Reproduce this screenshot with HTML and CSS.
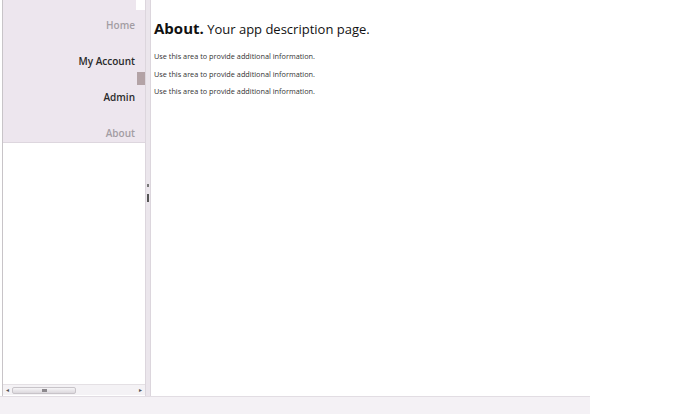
FILE: index.html
```html
<!DOCTYPE html>
<html>
<head>
<meta charset="utf-8">
<link rel="stylesheet" href="styles.css">
</head>
<body>
<div class="app">
  <div class="main">
    <div class="side">
      <div class="navbox">
        <ul class="nav">
          <li class="item dim">Home</li>
          <li class="item">My Account</li>
          <li class="item">Admin</li>
          <li class="item dim">About</li>
        </ul>
        <div class="vscroll">
          <div class="vcap"></div>
          <div class="vthumb"></div>
        </div>
      </div>
      <div class="sidefill"></div>
      <div class="hscroll">
        <span class="arrow">&#9666;</span>
        <div class="hthumb"><span class="grip"></span></div>
        <div class="htrack"></div>
        <span class="arrow">&#9656;</span>
      </div>
    </div>
    <div class="splitter">
      <span class="dot"></span>
      <span class="bar"></span>
    </div>
    <div class="content">
      <h1 class="title"><strong>About.</strong> Your app description page.</h1>
      <p class="para">Use this area to provide additional information.</p>
      <p class="para">Use this area to provide additional information.</p>
      <p class="para">Use this area to provide additional information.</p>
    </div>
  </div>
  <div class="status"></div>
</div>
</body>
</html>
```

FILE: styles.css
```css
html, body {
  margin: 0;
  padding: 0;
  background: #ffffff;
  font-family: "Open Sans", "Noto Sans", sans-serif;
}
.app {
  width: 700px;
  height: 414px;
  display: flex;
  flex-direction: column;
}
.main {
  height: 396px;
  display: flex;
}
.side {
  margin-left: 2px;
  width: 142px;
  border-left: 1px solid #c8c4c8;
  display: flex;
  flex-direction: column;
}
.navbox {
  height: 143px;
  background: #ede6ee;
  border-bottom: 1px solid #ddd6de;
  display: flex;
  box-sizing: border-box;
}
.nav {
  list-style: none;
  margin: 0;
  padding: 0 1px 0 0;
  flex: 1;
  display: flex;
  flex-direction: column;
}
.item {
  height: 36px;
  display: flex;
  align-items: center;
  justify-content: flex-end;
  padding-top: 14px;
  font-size: 10px;
  font-weight: 600;
  color: #2a2a2a;
  box-sizing: border-box;
  flex: none;
}
.dim {
  color: #a39da3;
}
.vscroll {
  width: 9px;
  display: flex;
  flex-direction: column;
  align-items: center;
}
.vcap {
  width: 9px;
  height: 10px;
  background: #ffffff;
}
.vthumb {
  margin-top: 62px;
  width: 8px;
  height: 13px;
  background: #b3a3a6;
}
.sidefill {
  flex: 1;
  background: #ffffff;
}
.hscroll {
  height: 10px;
  display: flex;
  align-items: center;
  border-top: 1px solid #e4e0e4;
  background: #f4f2f5;
  margin-bottom: 1px;
}
.arrow {
  width: 9px;
  font-size: 6px;
  color: #555;
  text-align: center;
}
.hthumb {
  width: 64px;
  height: 7px;
  background: linear-gradient(#f6f5f7, #dcd8dd);
  border: 1px solid #c8c4c9;
  border-radius: 2px;
  display: flex;
  align-items: center;
  justify-content: center;
  box-sizing: border-box;
}
.grip {
  width: 5px;
  height: 3px;
  background: #8d898e;
}
.htrack {
  flex: 1;
}
.splitter {
  width: 4px;
  background: #ebe6ec;
  border-left: 1px solid #dcd6dd;
  border-right: 1px solid #dcd6dd;
  display: flex;
  flex-direction: column;
  align-items: center;
}
.dot {
  margin-top: 184px;
  width: 2px;
  height: 3px;
  background: #777;
}
.bar {
  margin-top: 7px;
  width: 2px;
  height: 8px;
  background: #555;
}
.content {
  flex: 1;
  padding-left: 3px;
  padding-top: 18px;
}
.title {
  margin: 0 0 9px 0;
  font-size: 13px;
  font-weight: normal;
  color: #111;
  line-height: 20px;
}
.title strong {
  font-size: 15px;
  font-weight: 700;
}
.para {
  margin: 0;
  font-size: 7.3px;
  line-height: 17.5px;
  color: #333;
}
.status {
  width: 590px;
  height: 18px;
  background: #f4f1f5;
  border-top: 1px solid #e2dde3;
  box-sizing: border-box;
}
```
